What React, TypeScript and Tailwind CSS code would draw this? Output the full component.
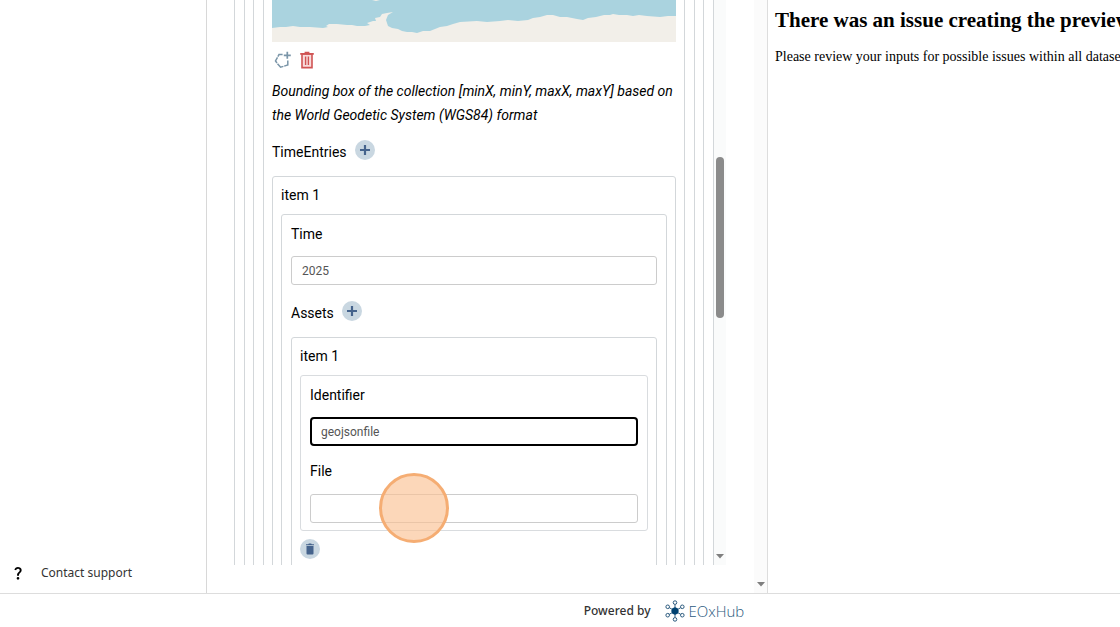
import React from 'react';
import { MdQuestionMark } from 'react-icons/md';

const inputClass =
  'block h-[29px] w-full rounded-[3px] border border-[#cccccc] bg-white px-2.5 text-xs text-[#555555] outline-none';

const COAST =
  'M0 28 L8 27 L14 27 L21 26 L28 27 L38 27 L51 28 L56 27 L54 26 L57 24 L65 24 L75 25 L80 25 L85 26 L93 26 L98 25 L95 23 L101 21 L104 21 L103 18 L108 17 L110 14 L115 13 L121 12 L116 15 L114 20 L116 26 L120 28 L126 29 L130 31 L135 32 L140 32 L145 33 L151 31 L158 31 L168 27 L175 26 L181 24 L188 22 L205 21 L215 22 L228 21 L236 20 L246 21 L256 20 L261 18 L268 17 L275 15 L281 15 L288 17 L295 17 L305 19 L311 20 L316 18 L324 17 L332 15 L338 15 L341 14 L347 15 L355 15 L361 16 L367 15 L375 16 L388 17 L396 16 L404 16 V42 H0 Z';

const MapPreview: React.FC = () => (
  <svg className="block h-[42px] w-full" viewBox="0 0 404 42" preserveAspectRatio="none">
    <rect width="404" height="42" fill="#aad3df" />
    <path d={COAST} fill="#f2efe9" />
    <path d="M100 0 L104 1 L108 0 Z" fill="#f2efe9" />
  </svg>
);

const PolygonPlusIcon: React.FC = () => (
  <svg className="size-[18px]" viewBox="0 0 18 18" fill="none" stroke="#7a95a8" strokeWidth="1.5">
    <path d="M8.6 3.6H5L3.9 5.6M3.5 6.3L1.5 10L3 12M3.5 12.7L6.6 16.2L9.4 15.4M10.2 15.1L13.8 14V9.4" />
    <path d="M13.3 0.8V7.8M9.8 4.3H16.8" strokeWidth="1.7" />
  </svg>
);

const TrashOutlineIcon: React.FC = () => (
  <svg className="h-[18px] w-3.5" viewBox="0 0 14 18" fill="none" stroke="#d05454">
    <path d="M2 3V16.6H12V3Z" fill="#f8dcdc" strokeWidth="1.6" />
    <path d="M0.2 2.8H13.8M4.6 1.5H9.4" strokeWidth="1.7" />
    <path d="M5.6 5.6V14M8.4 5.6V14" strokeWidth="1.4" />
  </svg>
);

const AddButton: React.FC<{ label: string }> = ({ label }) => (
  <button
    aria-label={label}
    className="flex size-5 items-center justify-center rounded-full bg-[#c9d7e1]"
  >
    <svg className="size-2.5" viewBox="0 0 10 10" stroke="#45638c" strokeWidth="2.2">
      <path d="M5 0V10M0 5H10" />
    </svg>
  </button>
);

const EOxHubLogo: React.FC = () => (
  <svg className="h-[22px] w-5" viewBox="0 0 20 22" fill="none" stroke="#2b5a7e" strokeWidth="1">
    <path d="M10 11V4.5M10 11V17.5M10 11L4.3 7.7M10 11L15.7 14.3M10 11L15.7 7.7M10 11L4.3 14.3" />
    <g fill="#ffffff">
      <circle cx="10" cy="2.6" r="1.8" />
      <circle cx="10" cy="19.4" r="1.8" />
      <circle cx="2.7" cy="6.8" r="1.8" />
      <circle cx="17.3" cy="6.8" r="1.8" />
      <circle cx="2.7" cy="15.2" r="1.8" />
      <circle cx="17.3" cy="15.2" r="1.8" />
    </g>
    <circle cx="10" cy="11" r="3.2" fill="#004170" stroke="#004170" />
  </svg>
);

const ArrowDown: React.FC = () => (
  <svg className="h-[5px] w-2" viewBox="0 0 8 5" fill="#7f7f7f">
    <path d="M0 0H8L4 4.6Z" />
  </svg>
);

const AssetForm: React.FC = () => (
  <div className="rounded-[3px] border border-[#d9dcdf] px-[9px] py-[7px]">
    <label htmlFor="identifier" className="block">Identifier</label>
    <input
      id="identifier"
      defaultValue="geojsonfile"
      className="mt-2.5 block h-[29px] w-full rounded-[4px] border-2 border-black bg-white px-[9px] text-xs text-[#555555] outline-none"
    />
    <label htmlFor="file" className="mt-[13px] block">File</label>
    <div className="relative mt-[11px]">
      <input id="file" className={inputClass} />
      <span className="pointer-events-none absolute -top-[21px] left-[69px] size-[70px] rounded-full border-[3px] border-[#f5ad73] bg-[#fbc194]/65" />
    </div>
  </div>
);

const TimeEntryForm: React.FC = () => (
  <div className="rounded-[3px] border border-[#d3d7da] px-[9px] pt-[7px] pb-20">
    <label htmlFor="time" className="block">Time</label>
    <input id="time" defaultValue="2025" className={`mt-2.5 ${inputClass}`} />
    <div className="mt-4 flex items-start gap-2">
      <span>Assets</span>
      <AddButton label="Add asset" />
    </div>
    <div className="mt-3 rounded-[3px] border border-[#d3d7da] px-2 pt-1.5 pb-20">
      <p className="mb-[7px]">item 1</p>
      <AssetForm />
      <button
        aria-label="Delete asset"
        className="mt-2 flex size-5 items-center justify-center rounded-full bg-[#c9d7e1]"
      >
        <svg className="h-3 w-2" viewBox="0 0 8 12" fill="#45638c">
          <path d="M0 1.2H2.3L2.8 0.6H5.2L5.7 1.2H8V2.3H0ZM0.5 3H7.5V10.4Q7.5 11.4 6.5 11.4H1.5Q0.5 11.4 0.5 10.4Z" />
        </svg>
      </button>
    </div>
  </div>
);

const CollectionForm: React.FC = () => (
  <div className="leading-6">
    <MapPreview />
    <div className="flex h-[37px] items-start gap-2 pt-[9px] pl-0.5">
      <button aria-label="Draw bounding box"><PolygonPlusIcon /></button>
      <button aria-label="Clear bounding box"><TrashOutlineIcon /></button>
    </div>
    <p className="italic">
      Bounding box of the collection [minX, minY, maxX, maxY] based on the World Geodetic System (WGS84) format
    </p>
    <div className="mt-[13px] flex items-start gap-2">
      <span>TimeEntries</span>
      <AddButton label="Add time entry" />
    </div>
    <div className="mt-3 rounded-[3px] border border-[#d3d7da] px-2 pt-1.5 pb-20">
      <p className="mb-[7px]">item 1</p>
      <TimeEntryForm />
    </div>
  </div>
);

const Sidebar: React.FC = () => (
  <aside className="flex w-[207px] shrink-0 flex-col justify-end border-r border-[#d8d8d8] pb-2">
    <a href="#support" className="flex items-center gap-[15px] pl-2.5 font-['Noto_Sans',sans-serif] text-xs leading-6 text-[#333333]">
      <MdQuestionMark className="size-4 text-black" />
      Contact support
    </a>
  </aside>
);

const Editor: React.FC = () => (
  <main className="flex w-1/2 shrink-0">
    <div className="flex min-w-0 flex-1 pr-7 pb-7 pl-[27px]">
      <div className="min-w-0 flex-1 overflow-hidden border-x border-[#d3d7da] px-[9px]">
        <div className="h-full border-x border-[#d3d7da] px-2">
          <div className="h-full border-x border-[#d3d7da] px-[9px]">
            <div className="h-full border-x border-[#d3d7da] px-2 font-[Roboto,sans-serif] text-sm text-black">
              <CollectionForm />
            </div>
          </div>
        </div>
      </div>
      <div className="flex w-3 flex-col items-center justify-between bg-[#fafbfb] pt-[157px] pb-1.5">
        <div className="h-[161px] w-2 rounded-full bg-[#8b8b8b]" />
        <ArrowDown />
      </div>
    </div>
    <div className="flex w-[13px] flex-col items-center justify-end bg-[#fbfbfb] pb-1.5">
      <ArrowDown />
    </div>
  </main>
);

const Preview: React.FC = () => (
  <section className="min-w-0 flex-1 overflow-hidden border-l border-[#dddddd] pt-2 pl-[7px] font-['Liberation_Serif',serif] whitespace-nowrap text-black">
    <h2 className="text-[21px] leading-6 font-bold">There was an issue creating the preview</h2>
    <p className="mt-[17px] text-sm leading-4">Please review your inputs for possible issues within all datasets</p>
  </section>
);

const App: React.FC = () => {
  return (
    <div className="flex h-screen flex-col overflow-hidden bg-white">
      <div className="flex min-h-0 flex-1">
        <Sidebar />
        <Editor />
        <Preview />
      </div>
      <footer className="flex h-[34px] shrink-0 items-center justify-center border-t border-[#dddddd] pl-52 font-['Noto_Sans',sans-serif] text-xs text-[#333333]">
        <span className="font-medium">Powered by</span>
        <a href="#eoxhub" className="ml-3.5 flex items-center gap-1 font-['Open_Sans',sans-serif] text-[15px] font-light text-[#2b5a7e]">
          <EOxHubLogo />
          EOxHub
        </a>
      </footer>
    </div>
  );
};

export default App;
